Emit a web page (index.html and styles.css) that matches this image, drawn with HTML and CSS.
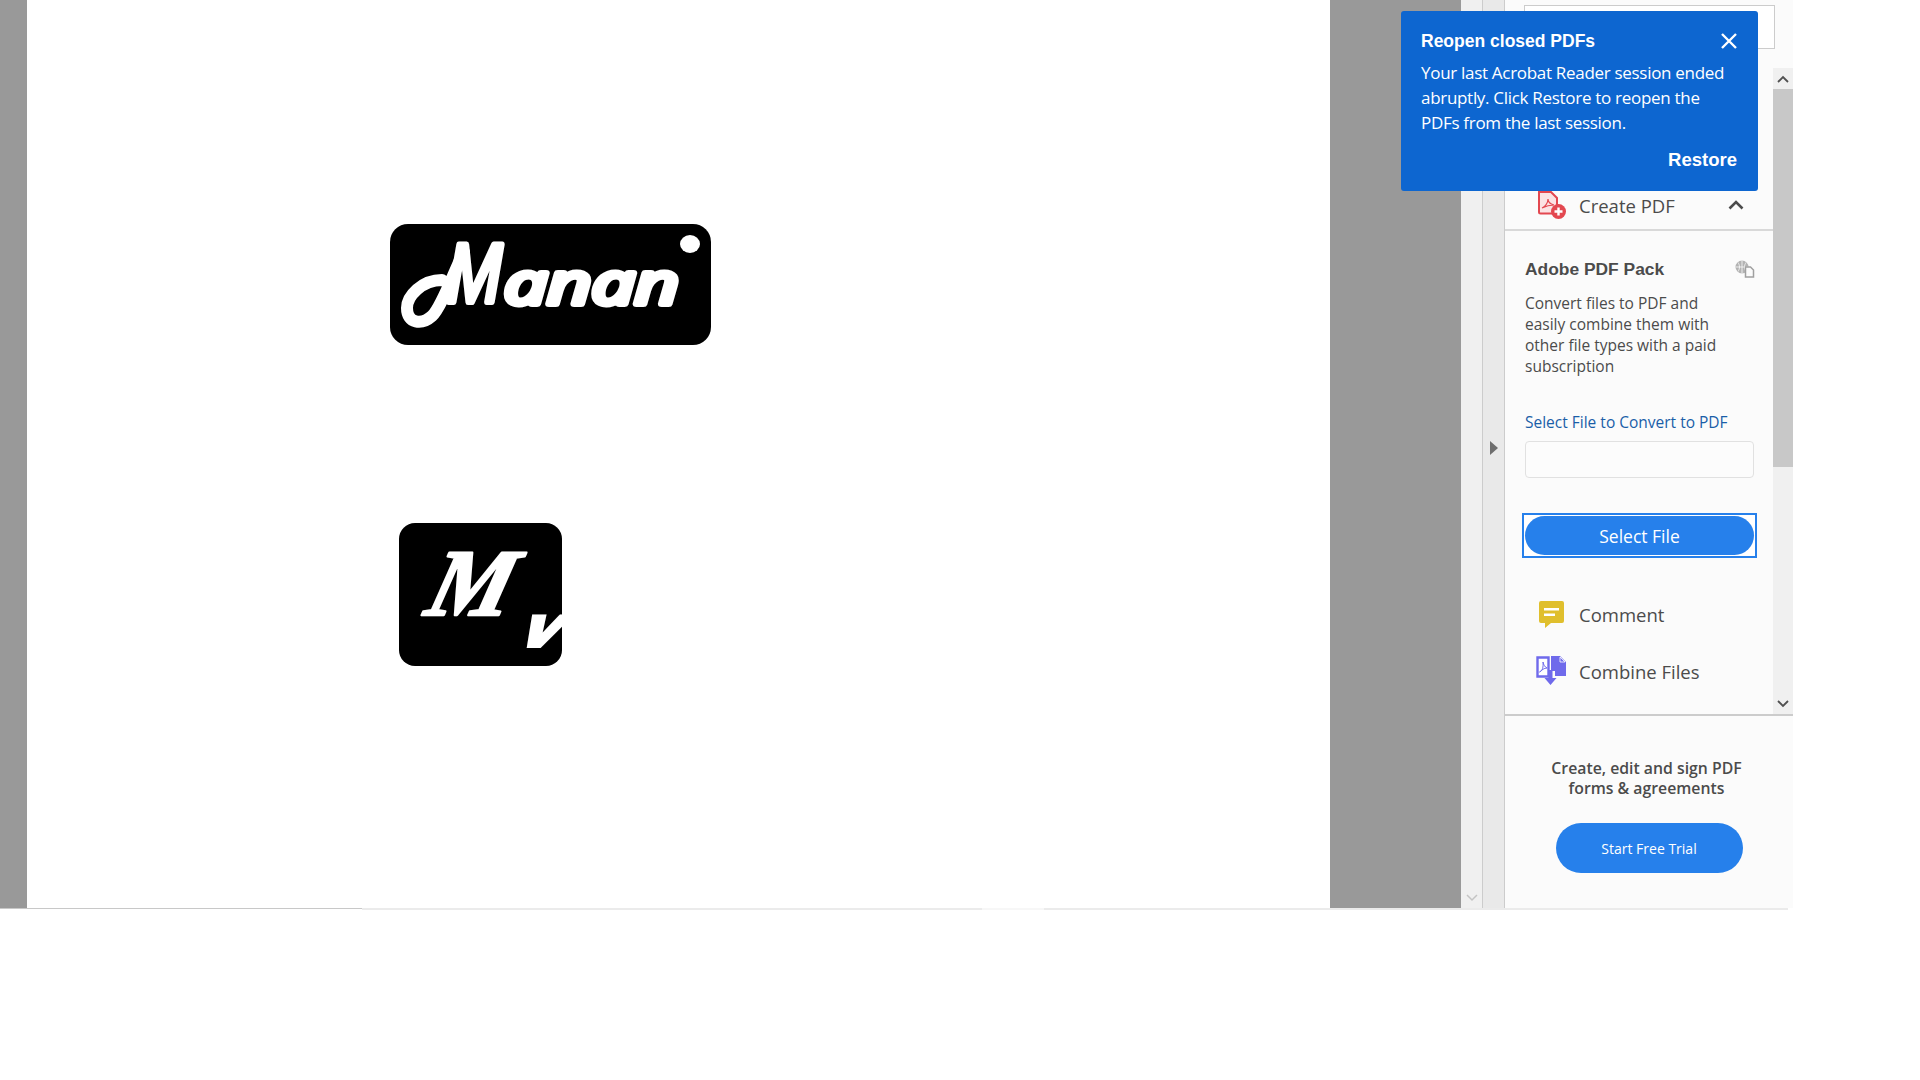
FILE: index.html
```html
<!DOCTYPE html>
<html lang="en">
<head>
    <meta charset="UTF-8">
    <meta name="viewport" content="width=device-width, initial-scale=1.0">
    <title>Adobe Acrobat Reader</title>
    <link rel="stylesheet" href="styles.css">
</head>
<body>
    <div class="window">
        <div class="doc-gutter-left"></div>
        <main class="doc-page">
            <div class="logo logo-manan">
                <svg width="321" height="121" viewBox="0 0 321 121">
                    <path class="swash" d="M52 56C32 56 17 72 17 84C17 100 32 101 42 92C52 83 66 42 74 28"/>
                    <text class="logo-big" x="56" y="78" textLength="56" lengthAdjust="spacingAndGlyphs">M</text>
                    <text class="logo-small" x="114" y="80" textLength="175" lengthAdjust="spacingAndGlyphs">anan</text>
                    <ellipse cx="300" cy="20" rx="10" ry="9" fill="#fff"/>
                </svg>
            </div>
            <div class="logo logo-mv">
                <svg width="163" height="143" viewBox="0 0 163 143">
                    <text class="logo-m" transform="translate(24 92) skewX(-15)" textLength="84" lengthAdjust="spacingAndGlyphs">M</text>
                    <text class="logo-v" transform="translate(118 123) skewX(-30)" textLength="36" lengthAdjust="spacingAndGlyphs">v</text>
                </svg>
            </div>
        </main>
        <div class="doc-gutter-right"></div>
        <div class="doc-scrollbar">
            <svg class="chevron" width="12" height="8" viewBox="0 0 12 8"><path d="M1 1l5 5 5-5" fill="none" stroke="#c4c4c4" stroke-width="1.5"/></svg>
        </div>
        <div class="splitter">
            <span class="splitter-arrow"></span>
        </div>

        <aside class="tools-pane">
            <div class="tools-top">
                <div class="tools-list">
                    <div class="search-box"></div>
                    <div class="tool-row tool-row-open">
                        <svg class="tool-icon" width="28" height="28" viewBox="0 0 28 28">
                            <path d="M1 1h12l6 6v14a1.500 1.500 0 0 1-1.500 1.500H2.500A1.500 1.500 0 0 1 1 21z" fill="#fbe3e4" stroke="#e34850" stroke-width="2"/>
                            <path d="M4 17c3-1 6-5 6-9 0 3 2 5 6 6-4 0-8 1-12 3z" fill="none" stroke="#e34850" stroke-width="1.200"/>
                            <circle cx="20.500" cy="20.500" r="7.500" fill="#e34850"/>
                            <path d="M20.500 16.500v8M16.500 20.500h8" stroke="#fff" stroke-width="2.400"/>
                        </svg>
                        <span class="tool-name">Create PDF</span>
                        <svg class="row-chevron" width="16" height="10" viewBox="0 0 16 10"><path d="M1.500 8.500L8 2l6.500 6.500" fill="none" stroke="#4b4b4b" stroke-width="2.600"/></svg>
                    </div>
                    <section class="pack">
                        <div class="pack-head">
                            <h2>Adobe PDF Pack</h2>
                            <svg width="20" height="18" viewBox="0 0 20 18">
                                <circle cx="7" cy="7" r="6.500" fill="#b3b3b3"/>
                                <path d="M1 7h12M7 .5v13M3 2.500c2 3 2 6 0 9M11 2.500c-2 3-2 6 0 9" fill="none" stroke="#fbfbfb" stroke-width=".8"/>
                                <path d="M10.500 7h5l3 3v7h-8z" fill="#fbfbfb" stroke="#a0a0a0" stroke-width="1.500"/>
                            </svg>
                        </div>
                        <p class="pack-text">Convert files to PDF and<br>easily combine them with<br>other file types with a paid<br>subscription</p>
                        <label class="pack-label">Select File to Convert to PDF</label>
                        <div class="file-input"></div>
                        <div class="focus-ring">
                            <button class="btn btn-select">Select File</button>
                        </div>
                    </section>
                    <div class="tool-row tool-row-comment">
                        <svg class="tool-icon" width="28" height="28" viewBox="0 0 28 28">
                            <path d="M3 1h21a2 2 0 0 1 2 2v18a2 2 0 0 1-2 2H13l-6 5v-5H3a2 2 0 0 1-2-2V3a2 2 0 0 1 2-2z" fill="#e0bf2d"/>
                            <path d="M6 8h15v2.500H6zM6 13.500h11V16H6z" fill="#fff"/>
                        </svg>
                        <span class="tool-name">Comment</span>
                    </div>
                    <div class="tool-row tool-row-combine">
                        <svg class="tool-icon icon-combine" width="30" height="30" viewBox="0 0 30 30">
                            <path d="M1.500 1.500h11v19h-11z" fill="#fff" stroke="#6f6aeb" stroke-width="2.400"/>
                            <path d="M3.500 16c3-1 4-5 3.500-10 .5 3 2 5 4 6-3 0-5 2-7.500 4z" fill="none" stroke="#6f6aeb" stroke-width="1"/>
                            <path d="M15 0h9l6 6v14H19v-5h-4z" fill="#6f6aeb"/>
                            <path d="M24 1l5 5h-5z" fill="#6f6aeb" stroke="#fff" stroke-width=".8"/>
                            <path d="M12.500 14h4v8h4l-6 7-6-7h4z" fill="#6f6aeb"/>
                        </svg>
                        <span class="tool-name">Combine Files</span>
                    </div>
                </div>
                <div class="tools-scrollbar">
                    <div class="scroll-btn">
                        <svg width="12" height="8" viewBox="0 0 12 8"><path d="M1 7l5-5 5 5" fill="none" stroke="#505050" stroke-width="1.800"/></svg>
                    </div>
                    <div class="scroll-thumb"></div>
                    <div class="scroll-track"></div>
                    <div class="scroll-btn">
                        <svg width="12" height="8" viewBox="0 0 12 8"><path d="M1 1l5 5 5-5" fill="none" stroke="#505050" stroke-width="1.800"/></svg>
                    </div>
                </div>
            </div>
            <div class="promo">
                <p class="promo-text">Create, edit and sign PDF<br>forms &amp; agreements</p>
                <button class="btn btn-trial">Start Free Trial</button>
            </div>
        </aside>

        <div class="toast">
            <div class="toast-head">
                <h3>Reopen closed PDFs</h3>
                <svg width="16" height="16" viewBox="0 0 16 16"><path d="M1 1l14 14M15 1L1 15" stroke="#fff" stroke-width="2.400"/></svg>
            </div>
            <p class="toast-text">Your last Acrobat Reader session ended<br>abruptly. Click Restore to reopen the<br>PDFs from the last session.</p>
            <div class="toast-action">Restore</div>
        </div>
    </div>
    <div class="status-line">
        <div class="status-dark"></div>
        <div class="status-light"></div>
        <div class="status-mid"></div>
        <div class="status-light2"></div>
    </div>
</body>
</html>
```

FILE: styles.css
```css
body {
    margin: 0;
    padding: 0;
    background-color: #fff;
    font-family: "Open Sans", "Liberation Sans", sans-serif;
    color: #4b4b4b;
    overflow: hidden;
}
h2, h3, p {
    margin: 0;
}
.window {
    position: relative;
    display: flex;
    width: 1793px;
    height: 908px;
}
.doc-gutter-left {
    width: 27px;
    background-color: #999;
}
.doc-page {
    width: 1304px;
    padding: 224px 0 0 363px;
    box-sizing: border-box;
    background-color: #fff;
}
.doc-gutter-right {
    width: 131px;
    background-color: #999;
}
.doc-scrollbar {
    width: 22px;
    background-color: #f0f0f0;
    border-right: 1px solid #ccc;
    display: flex;
    align-items: flex-end;
    justify-content: center;
    padding-bottom: 6px;
    box-sizing: border-box;
}
.splitter {
    width: 22px;
    background-color: #e9e9e9;
    border-right: 1px solid #ccc;
    box-sizing: border-box;
    display: flex;
    justify-content: center;
    padding: 441px 0 0 0;
}
.splitter-arrow {
    width: 0;
    height: 0;
    border-left: 8px solid #6e6e6e;
    border-top: 7px solid transparent;
    border-bottom: 7px solid transparent;
}

/* logos on the pdf page */
.logo {
    background-color: #000;
}
.logo svg {
    display: block;
}
.logo-manan {
    width: 321px;
    height: 121px;
    border-radius: 18px;
}
.logo-manan svg {
    overflow: visible;
}
.logo-mv {
    width: 163px;
    height: 143px;
    border-radius: 16px;
    margin: 178px 0 0 9px;
    overflow: hidden;
}
.swash {
    fill: none;
    stroke: #fff;
    stroke-width: 12;
    stroke-linecap: round;
}
.logo-big {
    font-family: "Open Sans", sans-serif;
    font-style: italic;
    font-size: 80px;
    fill: #fff;
    stroke: #fff;
    stroke-width: 6;
    stroke-linejoin: round;
}
.logo-small {
    font-family: "Open Sans", sans-serif;
    font-style: italic;
    font-size: 58px;
    fill: #fff;
    stroke: #fff;
    stroke-width: 6;
    stroke-linejoin: round;
}
.logo-m {
    font-family: "Liberation Serif", serif;
    font-style: italic;
    font-weight: 700;
    font-size: 95px;
    fill: #fff;
    stroke: #fff;
    stroke-width: 2.500;
    stroke-linejoin: round;
}
.logo-v {
    font-family: "Liberation Sans", sans-serif;
    font-weight: 700;
    font-size: 56px;
    fill: #fff;
    stroke: #fff;
    stroke-width: 4;
}

/* right hand pane */
.tools-pane {
    width: 288px;
    background-color: #fbfbfb;
    display: flex;
    flex-direction: column;
}
.tools-top {
    display: flex;
    height: 716px;
    border-bottom: 2px solid #ccc;
    box-sizing: border-box;
}
.tools-list {
    width: 268px;
}
.search-box {
    width: 251px;
    height: 44px;
    margin: 5px 0 0 19px;
    border: 1px solid #ccc;
    box-sizing: border-box;
    background-color: #fff;
}
.tool-row {
    display: flex;
    align-items: center;
    padding-left: 33px;
    height: 38px;
}
.tool-icon {
    flex: none;
    margin-right: 13px;
}
.tool-name {
    font-size: 18.500px;
    white-space: nowrap;
}
.tool-row-open {
    margin-top: 143px;
    height: 39px;
    padding-bottom: 11px;
    border-bottom: 2px solid #d9d9d9;
    box-sizing: border-box;
}
.row-chevron {
    margin-left: 53px;
}
.tool-row-comment {
    margin-top: 37px;
}
.tool-row-combine {
    margin-top: 19px;
}
.icon-combine {
    margin-left: -2px;
    margin-right: 13px;
}
.pack {
    padding: 0 19px 0 20px;
}
.pack-head {
    display: flex;
    justify-content: space-between;
    align-items: center;
    padding-top: 26px;
}
.pack-head svg {
    margin-right: -1px;
}
.pack-head h2 {
    font-family: "Liberation Sans", Arial, sans-serif;
    font-size: 17.400px;
    line-height: 24px;
    font-weight: 700;
}
.pack-text {
    font-size: 15.500px;
    line-height: 21px;
    margin-top: 12px;
}
.pack-label {
    display: block;
    font-size: 15.500px;
    line-height: 20px;
    color: #1a5ea8;
    margin-top: 35px;
}
.file-input {
    height: 37px;
    margin-top: 9px;
    border: 1px solid #e1e1e1;
    border-radius: 4px;
    background-color: #fcfcfc;
    box-sizing: border-box;
}
.focus-ring {
    margin: 35px -3px 0;
    padding: 1px;
    border: 2px solid #2680eb;
    background-color: #fff;
    display: flex;
}
.btn {
    border: none;
    color: #fff;
    background-color: #2680eb;
    font-family: "Open Sans", sans-serif;
    cursor: pointer;
}
.btn-select {
    width: 100%;
    height: 39px;
    border-radius: 20px;
    font-size: 17.500px;
}
.tools-scrollbar {
    width: 20px;
    margin-top: 68px;
    background-color: #f0f0f0;
    display: flex;
    flex-direction: column;
}
.scroll-btn {
    height: 21px;
    display: flex;
    align-items: center;
    justify-content: center;
}
.scroll-thumb {
    height: 378px;
    background-color: #c8c8c8;
}
.scroll-track {
    flex: 1;
}
.promo {
    text-align: center;
    padding: 42px 0 0 0;
}
.promo-text {
    font-size: 15.800px;
    line-height: 20px;
    font-weight: 600;
    padding-right: 5px;
}
.btn-trial {
    width: 187px;
    height: 50px;
    margin-top: 25px;
    border-radius: 25px;
    font-size: 14px;
}

/* restore notice */
.toast {
    position: absolute;
    left: 1401px;
    top: 11px;
    width: 357px;
    height: 180px;
    padding: 18px 21px 0 20px;
    box-sizing: border-box;
    background-color: #0d66d0;
    border-radius: 3px;
    color: #fff;
}
.toast-head {
    display: flex;
    justify-content: space-between;
    align-items: center;
}
.toast-head h3 {
    font-family: "Liberation Sans", Arial, sans-serif;
    font-size: 17.500px;
    line-height: 24px;
    font-weight: 700;
}
.toast-text {
    font-size: 17px;
    letter-spacing: -.3px;
    line-height: 25px;
    margin-top: 7px;
    white-space: nowrap;
}
.toast-action {
    font-family: "Liberation Sans", Arial, sans-serif;
    font-size: 18.500px;
    font-weight: 700;
    line-height: 24px;
    text-align: right;
    margin-top: 13px;
}

/* thin strip under the window */
.status-line {
    display: flex;
    width: 1788px;
    height: 2px;
}
.status-dark {
    width: 362px;
    height: 1px;
    background-color: #c8c8c8;
}
.status-light {
    width: 620px;
    background-color: #ebebeb;
}
.status-mid {
    width: 62px;
    background-color: #f7f7f7;
}
.status-light2 {
    flex: 1;
    background-color: #ebebeb;
}
```
